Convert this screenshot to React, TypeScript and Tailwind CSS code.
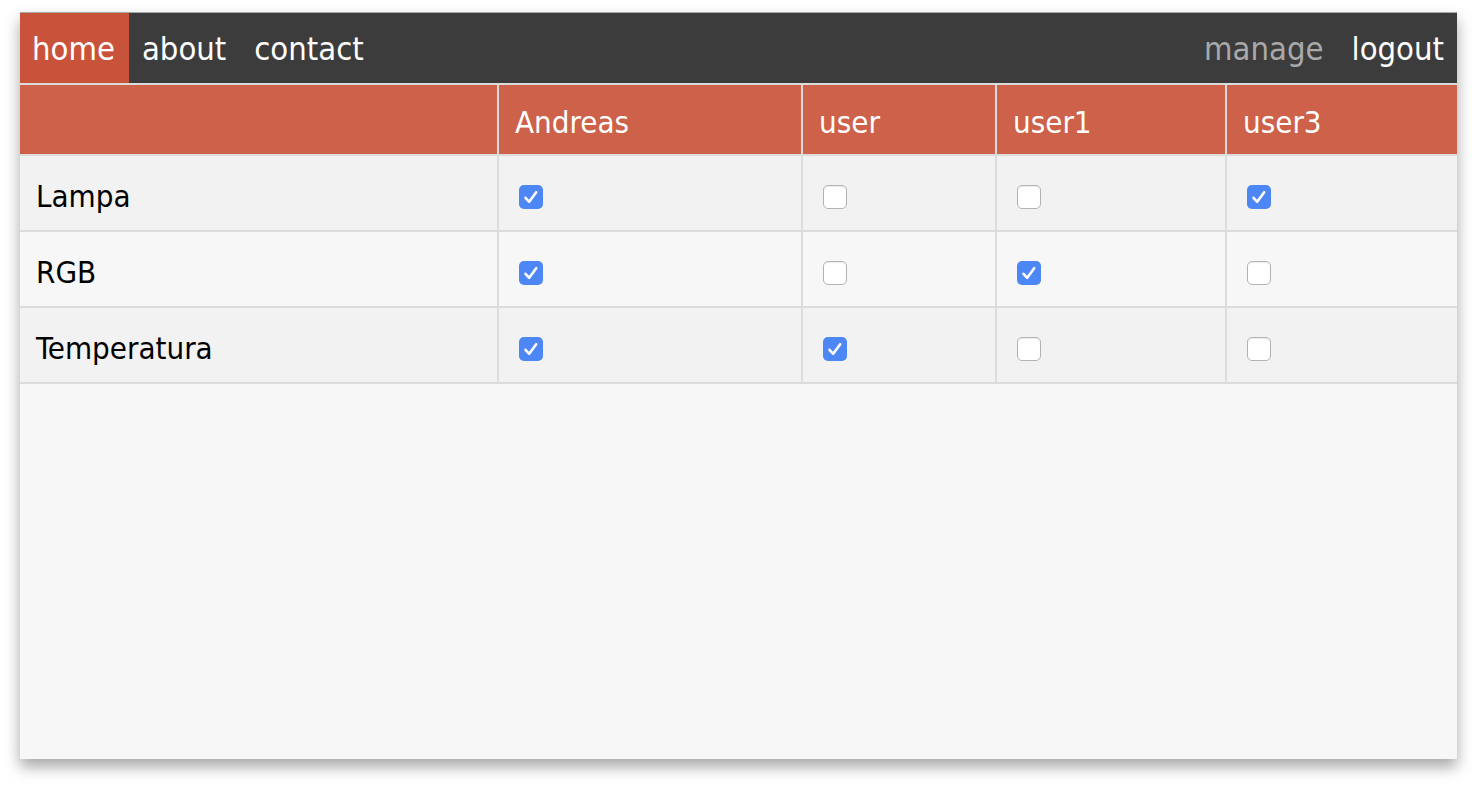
import React from "react"

const users = ["Andreas", "user", "user1", "user3"]
const rows: { name: string; perms: boolean[] }[] = [
  { name: "Lampa", perms: [true, false, false, true] },
  { name: "RGB", perms: [true, false, true, false] },
  { name: "Temperatura", perms: [true, true, false, false] },
]
const widths = ["w-[478px]", "w-[304px]", "w-[194px]", "w-[230px]", "w-[231px]"]

function Box({ on }: { on: boolean }) {
  if (on) {
    return (
      <span className="inline-flex h-6 w-6 items-center justify-center rounded-[5px] bg-[#4d86f5]">
        <svg viewBox="0 0 24 24" className="h-6 w-6" fill="none" stroke="white" strokeWidth="2.6" strokeLinecap="round" strokeLinejoin="round">
          <path d="M6.5 12.8 L10.2 16.8 L17.2 7.2" />
        </svg>
      </span>
    )
  }
  return <span className="inline-block h-6 w-6 rounded-[5px] border border-[#b3b3b3] bg-white shadow-[inset_0_1px_1px_rgba(0,0,0,0.08)]" />
}

export default function App() {
  return (
    <div className="min-h-screen w-full bg-white pl-5 pt-3" style={{ fontFamily: '"DejaVu Sans Condensed", "DejaVu Sans", sans-serif' }}>
      <div className="flex h-[747px] w-[1437px] flex-col border-t border-[#a8a8a8] bg-[#f7f7f7] shadow-[0_8px_14px_rgba(0,0,0,0.35)]">
        <nav className="flex h-[70px] items-stretch bg-[#3c3c3c] text-[32.5px] text-white">
          <a className="flex items-center bg-[#c9533a] pl-[12px] pr-[14px] pt-[3px]">home</a>
          <a className="flex items-center px-[13px] pt-[3px]">about</a>
          <a className="flex items-center px-[15px] pt-[3px]">contact</a>
          <div className="flex-1" />
          <a className="flex items-center px-[14px] pt-[3px] text-[#a9a9a9]">manage</a>
          <a className="flex items-center pl-[14px] pr-[13px] pt-[3px]">logout</a>
        </nav>
        <div className="h-[2px] bg-[#dcdcdc]" />
        <table className="table-fixed border-collapse text-[31px]">
          <thead>
            <tr className="h-[70px] bg-[#cd6149] text-white">
              <th className={`${widths[0]} border-r-2 border-[#dcdcdc]`} />
              {users.map((u, i) => (
                <th key={u} className={`${widths[i + 1]} border-r-2 border-[#dcdcdc] px-4 pt-[5px] text-left font-normal last:border-r-0`}>
                  {u}
                </th>
              ))}
            </tr>
          </thead>
          <tbody>
            {rows.map((r, ri) => (
              <tr key={r.name} className={`h-[76px] border-t-2 border-b-2 border-[#dcdcdc] ${ri % 2 === 1 ? "bg-[#f7f7f7]" : "bg-[#f2f2f2]"}`}>
                <td className="border-r-2 border-[#dcdcdc] px-4 pt-[7px] text-black">{r.name}</td>
                {r.perms.map((p, i) => (
                  <td key={i} className="border-r-2 border-[#dcdcdc] pl-5 align-middle last:border-r-0">
                    <div className="flex pt-[8px]">
                      <Box on={p} />
                    </div>
                  </td>
                ))}
              </tr>
            ))}
          </tbody>
        </table>
      </div>
    </div>
  )
}
